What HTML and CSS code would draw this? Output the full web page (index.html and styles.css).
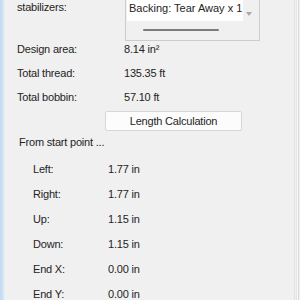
FILE: index.html
```html
<!DOCTYPE html>
<html>
<head>
<meta charset="utf-8">
<link rel="stylesheet" href="styles.css">
</head>
<body>
<div class="window">
  <div class="edge-left"></div>
  <div class="panel">
    <div class="stab-row">
      <div class="stab-label">stabilizers:</div>
      <div class="listbox">
        <div class="list">
          <div class="item">Topping: Water Soluble x 1</div>
          <div class="item">Backing: Tear Away x 1</div>
        </div>
        <div class="vscroll"><span class="arrow"></span></div>
        <div class="hscroll"><span class="thumb"></span></div>
        <div class="corner"></div>
      </div>
    </div>
    <div class="kv"><span>Design area:</span><span>8.14 in²</span></div>
    <div class="kv"><span>Total thread:</span><span>135.35 ft</span></div>
    <div class="kv"><span>Total bobbin:</span><span>57.10 ft</span></div>
    <button class="btn">Length Calculation</button>
    <div class="from">From start point ...</div>
    <div class="sub">
      <div class="sub-row"><span>Left:</span><span>1.77 in</span></div>
      <div class="sub-row"><span>Right:</span><span>1.77 in</span></div>
      <div class="sub-row"><span>Up:</span><span>1.15 in</span></div>
      <div class="sub-row"><span>Down:</span><span>1.15 in</span></div>
      <div class="sub-row"><span>End X:</span><span>0.00 in</span></div>
      <div class="sub-row"><span>End Y:</span><span>0.00 in</span></div>
    </div>
  </div>
  <div class="edge-right"></div>
</div>
</body>
</html>
```
FILE: styles.css
```css
html, body {
  margin: 0;
  padding: 0;
}
body {
  width: 300px;
  height: 300px;
  overflow: hidden;
  background: #f0f0f0;
  font-family: "Liberation Sans", Arial, sans-serif;
  font-size: 11px;
  letter-spacing: -0.2px;
  color: #242424;
}
.window {
  display: flex;
  height: 300px;
}
.edge-left {
  width: 5px;
  flex: none;
  background: linear-gradient(to right, #c4daf1 0, #cfe2f5 3px, #e4eef8 4px, #f0f0f0 5px);
}
.panel {
  flex: 1;
  padding-left: 12px;
  min-width: 0;
}
.edge-right {
  width: 6px;
  flex: none;
  background: linear-gradient(to right, #e2e2e2 0, #e2e2e2 1px, #f0f0f0 1px, #f0f0f0 2px, #e4e4e4 2px, #e4e4e4 3px, #fbfbfb 3px, #fbfbfb 4px, #d9d9d9 4px, #d9d9d9 5px, #f0f0f0 5px);
}
.stab-row {
  display: grid;
  grid-template-columns: 108px 135px;
  height: 37px;
  align-items: start;
}
.stab-label {
  line-height: 14px;
}
.listbox {
  margin-top: -20px;
  height: 61px;
  box-sizing: border-box;
  border: 1px solid #cdcdcd;
  padding-left: 1px;
  display: grid;
  grid-template-columns: 116px 16px;
  grid-template-rows: 40px 19px;
  background: #f0f0f0;
}
.list {
  background: #fff;
  padding: 6px 0 0 2px;
  overflow: hidden;
  white-space: nowrap;
  letter-spacing: 0;
}
.item {
  line-height: 14px;
  height: 14px;
}
.arrow {
  display: block;
  width: 0;
  height: 0;
  margin: 31px 0 0 3px;
  border-left: 3.5px solid transparent;
  border-right: 3.5px solid transparent;
  border-top: 4px solid #a9a9a9;
}
.hscroll {
  padding-top: 8px;
}
.thumb {
  display: block;
  margin-left: 16px;
  width: 76px;
  height: 2px;
  border-radius: 1px;
  background: #7b7b7b;
}
.kv {
  display: grid;
  grid-template-columns: 107px auto;
  height: 24px;
  align-items: center;
}
.btn {
  display: block;
  margin: 2px 0 0 88px;
  width: 137px;
  height: 20px;
  padding: 0;
  box-sizing: border-box;
  border: 1px solid #d6d6d6;
  border-radius: 2px;
  background: #fcfcfc;
  font: inherit;
  letter-spacing: inherit;
  color: inherit;
}
.from {
  height: 23px;
  line-height: 23px;
  padding-left: 2px;
}
.sub {
  margin-top: 2px;
  padding-left: 16px;
}
.sub-row {
  display: grid;
  grid-template-columns: 75px auto;
  height: 25px;
  align-items: center;
}
```
